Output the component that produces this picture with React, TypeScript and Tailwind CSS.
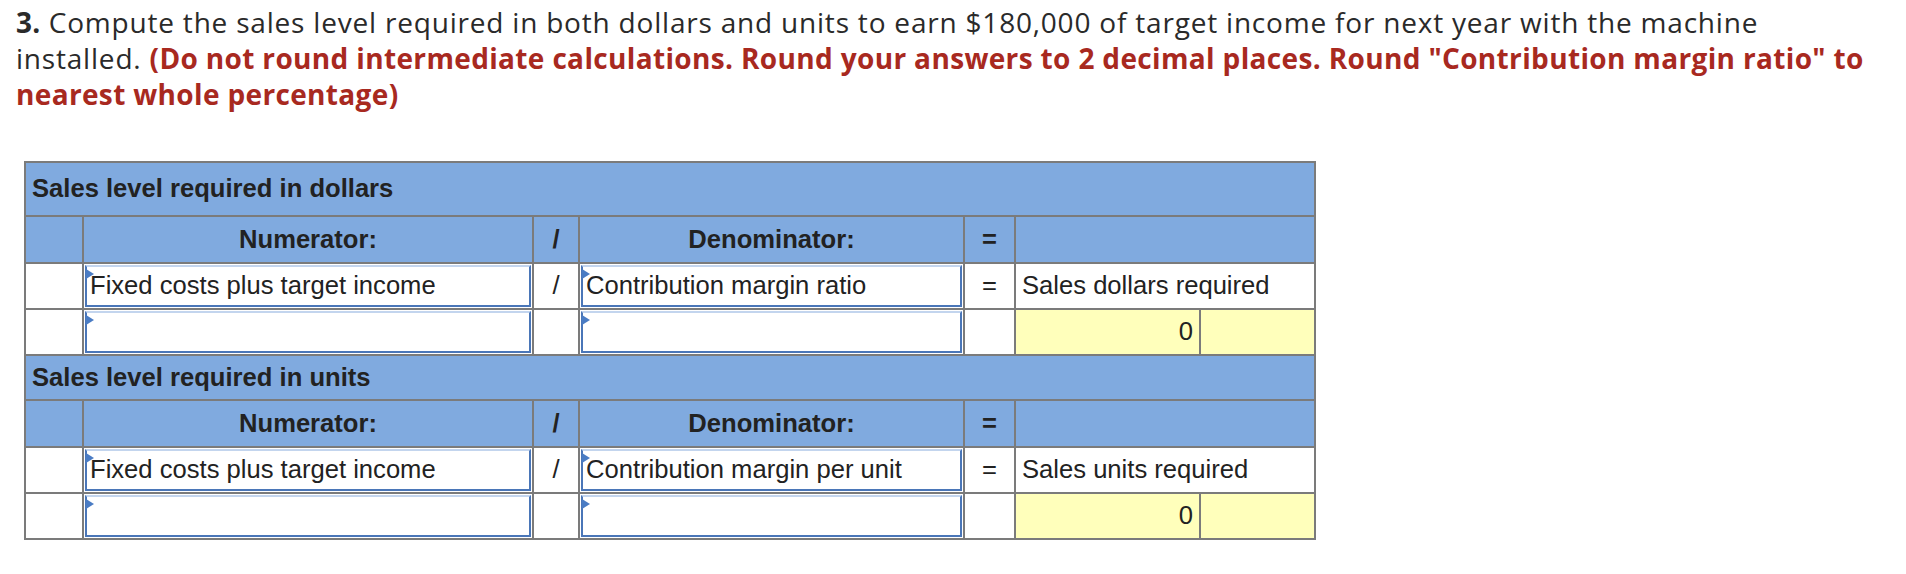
const blue = "bg-[#80aadf]";

const InputBox = ({ text }: { text?: string }) => (
  <div className="h-full bg-white p-px">
    <div className="relative h-full border-2 border-[#4a76b8] border-t-[#c3d5ee] bg-white flex items-center pl-[3px] leading-none">
      <span className="absolute left-[-1px] top-[2px] w-0 h-0 border-y-[5px] border-y-transparent border-l-[8px] border-l-[#4a7cc4]" />
      {text}
    </div>
  </div>
);

const Section = ({ title, denominator, result, first }: { title: string; denominator: string; result: string; first?: boolean }) => (
  <>
    <div className={`col-span-7 ${blue} font-bold flex items-center pl-[6px] ${first ? "h-[52px]" : "h-[43px]"}`}>{title}</div>

    {/* column headers */}
    <div className={`${blue} h-[45px]`} />
    <div className={`${blue} font-bold flex items-center justify-center`}>Numerator:</div>
    <div className={`${blue} font-bold flex items-center justify-center`}>/</div>
    <div className={`${blue} font-bold flex items-center justify-center`}>Denominator:</div>
    <div className={`${blue} font-bold flex items-center justify-center`}>=</div>
    <div className={`${blue} col-span-2`} />

    {/* labels */}
    <div className="bg-white h-[44px]" />
    <InputBox text="Fixed costs plus target income" />
    <div className="bg-white flex items-center justify-center">/</div>
    <InputBox text={denominator} />
    <div className="bg-white flex items-center justify-center">=</div>
    <div className="bg-white col-span-2 flex items-center pl-[6px]">{result}</div>

    {/* amounts */}
    <div className="bg-white h-[44px]" />
    <InputBox />
    <div className="bg-white" />
    <InputBox />
    <div className="bg-white" />
    <div className="bg-[#ffffbb] flex items-center justify-end pr-[6px]">0</div>
    <div className="bg-[#ffffbb]" />
  </>
);

export default function App() {
  return (
    <div className="min-h-screen bg-white text-[#222]">
      <p className="pl-4 pt-[4px] text-[28px] leading-[36px] tracking-[0.8px] text-[#2a2a2a] whitespace-nowrap" style={{ fontFamily: "'Open Sans', Lato, sans-serif" }}>
        <b className="tracking-[0.35px]">3.</b> Compute the sales level required in both dollars and units to earn $180,000 of target income for next year with the machine
        <br />
        installed.{" "}
        <span className="font-bold tracking-[0.35px] text-[#a8291f]">
          (Do not round intermediate calculations. Round your answers to 2 decimal places. Round "Contribution margin ratio" to
          <br />
          nearest whole percentage)
        </span>
      </p>

      <div
        className="ml-[24px] mt-[49px] inline-grid grid-cols-[56px_448px_44px_383px_49px_183px_113px] gap-[2px] bg-[#7b7b7b] border-2 border-[#7b7b7b] text-[25.6px] leading-none tracking-normal"
        style={{ fontFamily: "'Liberation Sans', Arial, sans-serif" }}
      >
        <Section first title="Sales level required in dollars" denominator="Contribution margin ratio" result="Sales dollars required" />
        <Section title="Sales level required in units" denominator="Contribution margin per unit" result="Sales units required" />
      </div>
    </div>
  );
}
